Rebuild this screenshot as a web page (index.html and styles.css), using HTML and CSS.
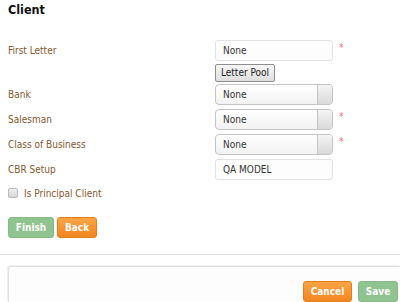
FILE: index.html
```html
<!DOCTYPE html>
<html>
<head>
<meta charset="utf-8">
<link rel="stylesheet" href="styles.css">
</head>
<body>
<div class="page">
  <h1 class="title">Client</h1>
  <div class="form">
    <div class="row row-first">
      <span class="label">First Letter</span>
      <div class="field"><div class="input">None</div><span class="req">*</span></div>
    </div>
    <div class="row row-pool">
      <span class="label"></span>
      <div class="field"><button class="pool">Letter Pool</button></div>
    </div>
    <div class="row">
      <span class="label">Bank</span>
      <div class="field"><div class="select"><span class="val">None</span><span class="arrow"></span></div></div>
    </div>
    <div class="row">
      <span class="label">Salesman</span>
      <div class="field"><div class="select"><span class="val">None</span><span class="arrow"></span></div><span class="req">*</span></div>
    </div>
    <div class="row">
      <span class="label">Class of Business</span>
      <div class="field"><div class="select"><span class="val">None</span><span class="arrow"></span></div><span class="req">*</span></div>
    </div>
    <div class="row">
      <span class="label">CBR Setup</span>
      <div class="field"><div class="input">QA MODEL</div></div>
    </div>
    <div class="check-row">
      <span class="checkbox"></span><span class="check-label">Is Principal Client</span>
    </div>
    <div class="actions">
      <button class="btn btn-green">Finish</button>
      <button class="btn btn-orange">Back</button>
    </div>
  </div>
  <div class="sep"></div>
  <div class="panel">
    <div class="panel-actions">
      <button class="btn btn-orange btn-cancel">Cancel</button>
      <button class="btn btn-green btn-save">Save</button>
    </div>
  </div>
</div>
</body>
</html>
```
FILE: styles.css
```css
html, body {
  margin: 0;
  padding: 0;
  background: #ffffff;
}
body {
  font-family: "DejaVu Sans Condensed", "DejaVu Sans", sans-serif;
  font-size: 10px;
  color: #333;
  width: 400px;
  height: 302px;
  overflow: hidden;
}
.page {
  padding-top: 2px;
}
.title {
  margin: 0 0 0 8px;
  font-size: 12.5px;
  font-weight: bold;
  color: #111;
  line-height: 15px;
}
.form {
  padding-top: 23px;
  padding-left: 8px;
}
.row {
  display: grid;
  grid-template-columns: 207px auto;
  align-items: center;
  height: 21px;
  margin-bottom: 4px;
}
.row-first {
  margin-bottom: 3px;
}
.row-pool {
  height: 18px;
  margin-bottom: 2px;
}
.label {
  color: #86572c;
}
.field {
  display: flex;
  align-items: flex-start;
  height: 100%;
}
.input {
  box-sizing: border-box;
  width: 118px;
  height: 21px;
  border: 1px solid #e2e2e2;
  border-radius: 3px;
  background: #fdfdfd;
  padding-left: 7px;
  line-height: 19px;
  color: #333;
}
.req {
  color: #f26a6a;
  font-size: 10px;
  margin-left: 6px;
  margin-top: 3px;
  line-height: 10px;
}
.pool {
  box-sizing: border-box;
  height: 18px;
  width: 60px;
  padding: 0;
  font-family: inherit;
  font-size: 10px;
  color: #222;
  border: 1px solid #8e8e8e;
  border-radius: 2px;
  background: linear-gradient(#f7f7f7, #dedede);
  line-height: 16px;
}
.select {
  box-sizing: border-box;
  width: 118px;
  height: 21px;
  border: 1px solid #c4c4c4;
  border-radius: 4px;
  background: linear-gradient(#ffffff, #f2f2f2);
  display: flex;
  overflow: hidden;
}
.select .val {
  flex: 1;
  padding-left: 7px;
  line-height: 19px;
  color: #333;
}
.select .arrow {
  width: 14px;
  border-left: 1px solid #c4c4c4;
  background: linear-gradient(#f4f4f4, #d9d9d9);
}
.check-row {
  display: flex;
  align-items: center;
  height: 14px;
  margin-top: 6px;
}
.checkbox {
  box-sizing: border-box;
  width: 10px;
  height: 10px;
  border: 1px solid #b9b9b9;
  border-radius: 2px;
  background: linear-gradient(#f0f0f0, #d6d6d6);
}
.check-label {
  margin-left: 6px;
  color: #86572c;
}
.actions {
  display: flex;
  gap: 3px;
  margin-top: 17px;
}
.btn {
  box-sizing: border-box;
  height: 21px;
  padding: 0;
  font-family: inherit;
  font-size: 10px;
  font-weight: bold;
  color: #fff;
  border-radius: 3px;
  line-height: 19px;
  cursor: pointer;
}
.btn-green {
  width: 46px;
  background: #8fc38f;
  border: 1px solid #86bb86;
}
.btn-orange {
  width: 40px;
  background: linear-gradient(#fba446, #f2861f);
  border: 1px solid #e37e1c;
}
.sep {
  margin-top: 16px;
  height: 1px;
  background: #e4e4e4;
}
.panel {
  margin: 11px 0 0 8px;
  height: 35px;
  border-top: 1px solid #e0e0e0;
  border-left: 1px solid #e0e0e0;
  border-top-left-radius: 3px;
  box-shadow: -1px -1px 0 #f0f0f0;
  background: #fdfdfd;
}
.panel-actions {
  display: flex;
  justify-content: flex-end;
  gap: 6px;
  padding-top: 14px;
  padding-right: 2px;
}
.btn-cancel {
  width: 49px;
}
.btn-save {
  width: 40px;
}
```
